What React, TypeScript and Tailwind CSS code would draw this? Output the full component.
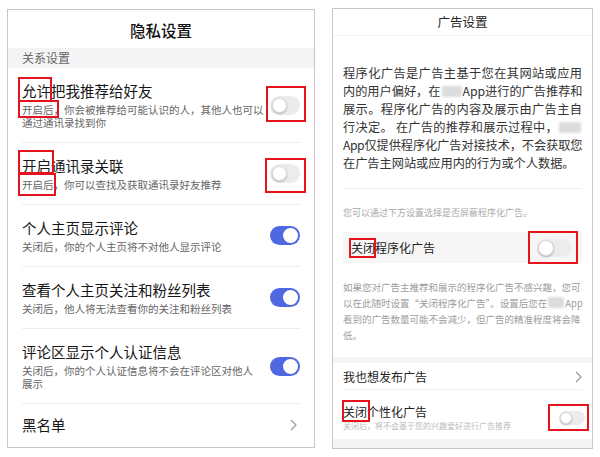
import type { ReactNode } from 'react'

const FONT = { fontFamily: '"Noto Sans CJK SC", "Noto Sans", sans-serif' }

// red annotation box laid over a word or a switch
function Mark({ children, box }: { children: ReactNode; box: string }) {
  return (
    <span className="relative">
      {children}
      <span className={`pointer-events-none absolute border-2 border-[#e5141c] ${box}`} />
    </span>
  )
}

type Size = 'lg' | 'md' | 'sm'

const trackSize: Record<Size, string> = {
  lg: 'w-[30px] h-[19px] p-[2px]',
  md: 'w-[35px] h-[18px] p-[1px]',
  sm: 'w-[26px] h-[14px] p-[1px]',
}

const knobSize: Record<Size, string> = {
  lg: 'w-[15px] h-[15px]',
  md: 'w-[16px] h-[16px]',
  sm: 'w-[12px] h-[12px]',
}

function Toggle({ on, size = 'lg' }: { on: boolean; size?: Size }) {
  return (
    <span
      className={`flex shrink-0 items-center rounded-full ${trackSize[size]} ${
        on ? 'justify-end bg-[#5067e2]' : 'justify-start bg-[#ececec]'
      }`}
    >
      <span
        className={`block rounded-full bg-white ${knobSize[size]} ${
          on ? '' : 'border border-[#dadada] shadow-[0_1px_2px_rgba(0,0,0,0.25)]'
        }`}
      />
    </span>
  )
}

function Chevron() {
  return (
    <svg width="7" height="12" viewBox="0 0 7 12" className="shrink-0">
      <polyline points="1,1 6,6 1,11" fill="none" stroke="#9a9a9a" strokeWidth="1.2" />
    </svg>
  )
}

function Blur({ w = 'w-[20px]' }: { w?: string }) {
  return <span className={`mx-[1px] inline-block h-[11px] rounded-[2px] bg-[#dcdcdc] align-[-1px] blur-[1px] ${w}`} />
}

function Row({ title, sub, right, last }: { title: ReactNode; sub: ReactNode; right: ReactNode; last?: boolean }) {
  return (
    <div className={`flex items-center py-[13px] ${last ? '' : 'border-b border-[#eeeeee]'}`}>
      <div className="flex-1">
        <div className="text-[14.5px] leading-[20px] text-[#161616]">{title}</div>
        <div className="mt-[2px] text-[10.5px] leading-[13px] text-[#666]">{sub}</div>
      </div>
      {right}
    </div>
  )
}

function PrivacyPanel() {
  return (
    <div className="mt-px flex h-[439px] w-[308px] flex-col border border-[#c6c6c6] bg-white">
      <div className="flex h-[38px] items-center justify-center pt-[3px] text-[15.5px] font-medium text-[#111]">隐私设置</div>
      <div className="h-[20px] bg-[#f4f4f4] px-[14px] text-[12px] leading-[20px] text-[#666]">关系设置</div>
      <div className="px-[14px]">
        <Row
          title={
            <>
              <Mark box="-left-[4px] -right-[1px] -top-[3px] -bottom-[1px]">允许</Mark>把我推荐给好友
            </>
          }
          sub={
            <>
              <Mark box="-left-[4px] -right-[5px] -top-[2px] -bottom-[1px]">开启后</Mark>，你会被推荐给可能认识的人，其他人也可以
              <br />
              通过通讯录找到你
            </>
          }
          right={
            <Mark box="-left-[4px] -right-[6px] -top-[10px] -bottom-[7px]">
              <Toggle on={false} />
            </Mark>
          }
        />
        <Row
          title={
            <>
              <Mark box="-left-[4px] -right-[3px] -top-[5px] bottom-[2px]">开启</Mark>通讯录关联
            </>
          }
          sub={
            <>
              <Mark box="-left-[4px] -right-[2px] -top-[4px] -bottom-[4px]">开启后</Mark>，你可以查找及获取通讯录好友推荐
            </>
          }
          right={
            <Mark box="-left-[5px] -right-[6px] -top-[6px] -bottom-[10px]">
              <Toggle on={false} />
            </Mark>
          }
        />
        <Row title="个人主页显示评论" sub="关闭后，你的个人主页将不对他人显示评论" right={<Toggle on />} />
        <Row title="查看个人主页关注和粉丝列表" sub="关闭后，他人将无法查看你的关注和粉丝列表" right={<Toggle on />} />
        <Row
          title="评论区显示个人认证信息"
          sub={
            <>
              关闭后，你的个人认证信息将不会在评论区对他人
              <br />
              展示
            </>
          }
          right={<Toggle on />}
        />
        <div className="flex h-[42px] items-center justify-between pr-[3px]">
          <span className="text-[14.5px] text-[#161616]">黑名单</span>
          <Chevron />
        </div>
      </div>
    </div>
  )
}

function AdPanel() {
  return (
    <div className="ml-[17px] flex h-[441px] w-[261px] flex-col border border-[#c6c6c6] bg-white">
      <div className="flex h-[27px] shrink-0 items-center justify-center border-b border-[#f2f2f2] text-[12.5px] text-[#222]">
        广告设置
      </div>
      <div className="px-[10px]">
        <div className="whitespace-nowrap border-b border-[#f0f0f0] pb-[16px] pt-[28px] text-[12.2px] leading-[18px] text-[#333]">
          <div className="text-justify [text-align-last:justify]">程序化广告是广告主基于您在其网站或应用</div>
          <div className="text-justify [text-align-last:justify]">
            内的用户偏好，在<Blur />App进行的广告推荐和
          </div>
          <div className="text-justify [text-align-last:justify]">展示。程序化广告的内容及展示由广告主自</div>
          <div className="text-justify [text-align-last:justify]">
            行决定。 在广告的推荐和展示过程中，<Blur w="w-[22px]" />
          </div>
          <div className="text-justify tracking-[-0.5px] [text-align-last:justify]">App仅提供程序化广告对接技术，不会获取您</div>
          <div>在广告主网站或应用内的行为或个人数据。</div>
        </div>
        <div className="pt-[17px] text-[9px] leading-[13px] text-[#aaa]">您可以通过下方设置选择是否屏蔽程序化广告。</div>
        <div className="mt-[13px] flex h-[31px] items-center justify-between bg-[#f6f6f6] pl-[8px] pr-[10px]">
          <span className="text-[12px] leading-[16px] text-[#222]">
            <Mark box="-left-[2px] -right-[1px] -top-[1px] -bottom-[2px]">关闭</Mark>程序化广告
          </span>
          <Mark box="-left-[9px] -right-[6px] -top-[8px] -bottom-[7px]">
            <Toggle on={false} size="md" />
          </Mark>
        </div>
        <div className="mt-[16px] whitespace-nowrap text-[9.5px] leading-[16px] text-[#9d9d9d]">
          <div>如果您对广告主推荐和展示的程序化广告不感兴趣，您可</div>
          <div>
            以在此随时设置“关闭程序化广告”。设置后您在<Blur w="w-[16px]" />App
          </div>
          <div>看到的广告数量可能不会减少，但广告的精准程度将会降</div>
          <div>低。</div>
        </div>
      </div>
      <div className="mt-[14px] h-[6px] shrink-0 bg-[#f4f4f4]" />
      <div className="px-[10px]">
        <div className="flex h-[27px] items-center justify-between border-b border-[#f0f0f0] pt-[2px]">
          <span className="text-[12px] text-[#222]">我也想发布广告</span>
          <Chevron />
        </div>
        <div className="flex items-center pb-[8px] pt-[14px]">
          <div className="flex-1">
            <div className="text-[12px] leading-[16px] text-[#222]">
              <Mark box="-left-[1px] -right-[3px] -top-[3px] -bottom-[2px]">关闭</Mark>个性化广告
            </div>
            <div className="whitespace-nowrap text-[8px] leading-[11px] text-[#bbb]">关闭后，将不会基于您的兴趣爱好进行广告推荐</div>
          </div>
          <span className="-mr-[3px]">
            <Mark box="-left-[11px] -right-[4px] -top-[7px] -bottom-[6px]">
              <Toggle on={false} size="sm" />
            </Mark>
          </span>
        </div>
      </div>
      <div className="flex-1 bg-[#f4f4f4]" />
    </div>
  )
}

export default function App() {
  return (
    <div className="flex h-[457px] w-[600px] items-start bg-white pl-[7px] pt-[8px]" style={FONT}>
      <PrivacyPanel />
      <AdPanel />
    </div>
  )
}
